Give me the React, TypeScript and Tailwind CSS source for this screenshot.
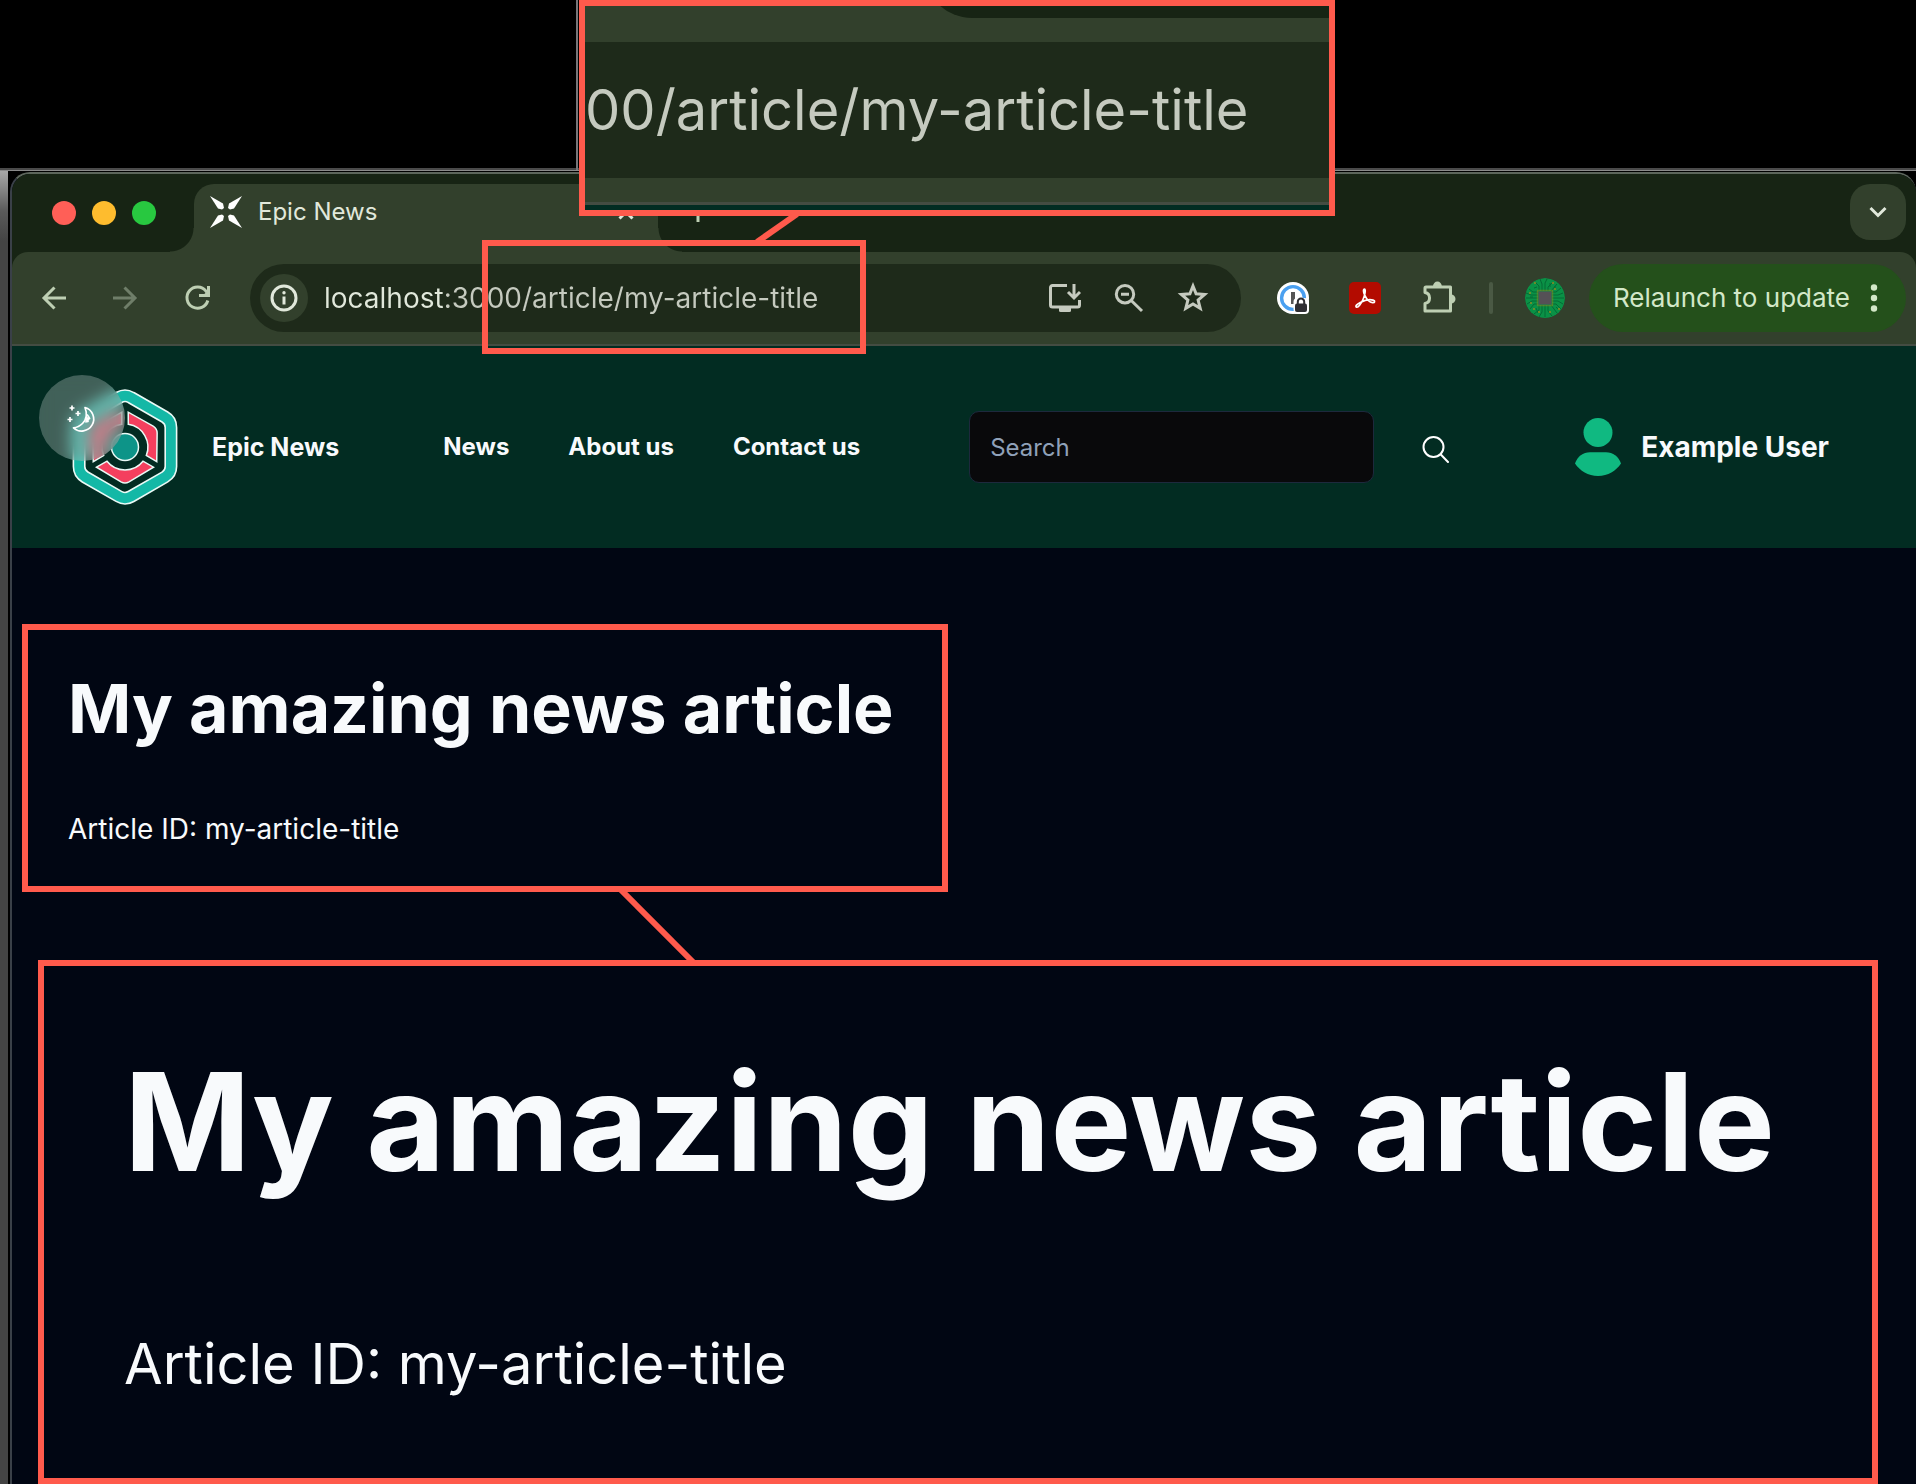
import React from "react";

const ARTICLE_PATH = "/article/my-article-title";

function Favicon() {
  return (
    <svg width="32" height="32" viewBox="0 0 32 32" fill="#fff" aria-hidden="true" className="shrink-0">
      <path d="M0 0 L13 7.5 L14 12 L12 13.5 L8 12.5 Z" />
      <path d="M32 0 L19 7.5 L18 12 L20 13.5 L24 12.5 Z" />
      <path d="M0 32 L13 24.5 L14 20 L12 18.5 L8 19.5 Z" />
      <path d="M32 32 L19 24.5 L18 20 L20 18.5 L24 19.5 Z" />
    </svg>
  );
}

function BackIcon() {
  return (
    <svg width="32" height="32" viewBox="0 0 32 32" fill="none" stroke="currentColor" strokeWidth="3" aria-hidden="true">
      <path d="M28 16H6M16.5 5.5L6 16l10.500 10.500" />
    </svg>
  );
}

function ForwardIcon() {
  return (
    <svg width="32" height="32" viewBox="0 0 32 32" fill="none" stroke="currentColor" strokeWidth="3" aria-hidden="true">
      <path d="M3 16h22M14.500 5.500L25 16 14.500 26.500" />
    </svg>
  );
}

function ReloadIcon() {
  return (
    <svg width="32" height="32" viewBox="0 0 32 32" fill="none" stroke="currentColor" strokeWidth="3" aria-hidden="true">
      <path d="M25.800 18.500A10.600 10.600 0 1 1 24 9.200L25 10.500" />
      <path d="M26.500 4v9.500H17" />
      <path d="M27 8v6h-7z" fill="currentColor" stroke="none" />
    </svg>
  );
}

function InfoIcon() {
  return (
    <svg width="28" height="28" viewBox="0 0 28 28" fill="none" aria-hidden="true">
      <circle cx="14" cy="14" r="12" stroke="#e1e8db" strokeWidth="3" />
      <path d="M14 12.500v8" stroke="#e1e8db" strokeWidth="3" />
      <circle cx="14" cy="8.800" r="1.700" fill="#e1e8db" />
    </svg>
  );
}

function InstallIcon() {
  return (
    <svg width="32" height="32" viewBox="0 0 32 32" fill="none" stroke="#c5cabf" strokeWidth="3" aria-hidden="true">
      <path d="M18 3.500H3.500a2 2 0 0 0-2 2V23a2 2 0 0 0 2 2h25a2 2 0 0 0 2-2v-5" />
      <path d="M25 2v13M19 10l6 6 6-6" />
      <path d="M10 25h12v3.500a1.500 1.500 0 0 1-1.500 1.500h-9a1.500 1.500 0 0 1-1.500-1.500z" fill="#c5cabf" stroke="none" />
    </svg>
  );
}

function ZoomOutIcon() {
  return (
    <svg width="32" height="32" viewBox="0 0 32 32" fill="none" stroke="#c5cabf" strokeWidth="3" aria-hidden="true">
      <circle cx="12" cy="12.200" r="8.700" />
      <path d="M8 12.200h8M18.500 18.700L29 29" />
    </svg>
  );
}

function StarIcon() {
  return (
    <svg width="32" height="32" viewBox="0 0 32 32" fill="none" stroke="#c5cabf" strokeWidth="3" strokeMiterlimit="10" aria-hidden="true">
      <path d="M16 4L19.100 11.800 27.600 12.500 21.100 18 23.200 26.300 16 21.900 8.800 26.300 10.900 18 4.400 12.500 12.900 11.800Z" />
    </svg>
  );
}

function PasswordIcon() {
  return (
    <svg width="32" height="32" viewBox="0 0 32 32" aria-hidden="true">
      <circle cx="16" cy="16" r="16" fill="#fff" />
      <rect x="16" y="16" width="16" height="16" rx="4" fill="#fff" />
      <circle cx="16" cy="16" r="11.400" fill="none" stroke="#4aa0f0" strokeWidth="3.400" />
      <rect x="14" y="10" width="4" height="12" fill="#555" />
      <rect x="16.500" y="16" width="15" height="15" rx="4" fill="#fff" />
      <rect x="18" y="21.500" width="12" height="8.500" rx="2" fill="#2f2f33" />
      <path d="M20.800 22v-2.200a3.200 3.200 0 0 1 6.400 0V22" fill="none" stroke="#2f2f33" strokeWidth="2" />
    </svg>
  );
}

function AcrobatIcon() {
  return (
    <svg width="32" height="32" viewBox="0 0 32 32" aria-hidden="true">
      <rect width="32" height="32" rx="5" fill="#b30b00" />
      <path
        d="M15.500 7.200c-1.400 0-1.300 3 .2 6 1.700 3.600 4.900 7.200 7.800 7.500 2.400.2 3-1.900.6-2.600-3.300-.9-9 .3-12.800 2.300-3.600 1.900-5.200 3.900-3.900 4.700 1.700 1 4.600-3.300 6.600-7.600 1.800-4 3.100-10.300 1.500-10.300z"
        fill="none"
        stroke="#fff"
        strokeWidth="1.700"
      />
    </svg>
  );
}

function PuzzleIcon() {
  return (
    <svg width="36" height="36" viewBox="0 0 36 36" aria-hidden="true">
      <path
        d="M5 7h24.500v24H4V23.500a5.600 5.600 0 0 0 0-11V8a1 1 0 0 1 1-1z"
        fill="none"
        stroke="#becfb3"
        strokeWidth="3"
        strokeLinejoin="round"
      />
      <path d="M12 6a4.400 4.400 0 0 1 8.800 0zM30 14.500a4.500 4.500 0 0 1 0 9z" fill="#becfb3" />
    </svg>
  );
}

function CircuitAvatar() {
  return (
    <svg width="40" height="40" viewBox="0 0 40 40" aria-hidden="true" className="rounded-full">
      <circle cx="20" cy="20" r="20" fill="#0a9146" />
      <g fill="none" stroke="#046a35" strokeWidth="1">
        <path d="M14 13V8l-4-4M17 13V6l-2-5M20 13V5l2-4M23 13V9l5-5M26 13l6-7M14 27v5l-5 4M17 27v7l-3 5M20 27v12M23 27v6l4 5M26 27l6 8" />
        <path d="M13 14H8l-4-3M13 17H6l-5-2M13 20H1M13 23H7l-5 3M13 26H9l-4 5M27 14h4l5-4M27 17h6l5-2M27 20h12M27 23h6l5 3M27 26h4l5 5" />
        <path d="M30 11V8M9 10l3-1M5 19l3 0M34 32l-3-3M25 5v4M11 30l2 5" />
      </g>
      <rect x="12.500" y="12.500" width="15" height="15" fill="none" stroke="#8f8a1c" strokeWidth="1.500" strokeDasharray="1 1" />
      <rect x="13.500" y="13.500" width="13" height="13" fill="#555156" />
      <g fill="#9a8c20">
        <circle cx="10" cy="5" r=".9" />
        <circle cx="28" cy="5" r=".9" />
        <circle cx="5" cy="15" r=".9" />
        <circle cx="6" cy="25" r=".9" />
        <circle cx="34" cy="31" r=".9" />
        <circle cx="30" cy="11" r=".9" />
        <circle cx="14" cy="34" r=".9" />
        <circle cx="25" cy="34" r=".9" />
        <circle cx="9" cy="31" r=".9" />
      </g>
    </svg>
  );
}

const SEGMENT = "M-28.500 20.200L-18 14.200A23 23 0 0 0 18 14.200L28.500 20.200 4 34.800Q0 37-4 34.800Z";
const HEXAGON =
  "M6 -49.500L39.900 -30Q45.900 -26.500 45.900 -19.600V19.600Q45.900 26.500 39.900 30L6 49.500Q0 53-6 49.500L-39.900 30Q-45.900 26.500-45.900 19.600V-19.600Q-45.900-26.500-39.900-30L-6-49.500Q0-53 6-49.500Z";

function SiteLogo() {
  return (
    <svg width="108" height="120" viewBox="-54 -60 108 120" aria-hidden="true" className="shrink-0">
      <g fill="none" strokeLinejoin="round">
        <path d={HEXAGON} stroke="#eafaf6" strokeWidth="13" />
        <path d={HEXAGON} stroke="#14b8a6" strokeWidth="9.800" />
      </g>
      <g fill="#f43f5e" stroke="#eafaf6" strokeWidth="1.500">
        <path d={SEGMENT} />
        <path d={SEGMENT} transform="rotate(-120)" />
        <path d={SEGMENT} transform="rotate(120)" />
      </g>
      <circle r="13.500" fill="#0d9488" stroke="#eafaf6" strokeWidth="1.500" />
    </svg>
  );
}

function MoonIcon() {
  return (
    <svg width="30" height="30" viewBox="0 0 30 30" fill="none" stroke="#fff" strokeWidth="1.700" strokeLinejoin="round" aria-hidden="true">
      <path d="M18 4.500A12 12 0 1 1 6.500 24.800C10 24.500 13 23 15.500 20.500 19 17 20.500 11 18 4.500Z" />
      <path d="M20 11.500c1.200 1.500 1.600 2.400 2.600 4l-1.800.8.200 2.200-2.800.5" />
      <path d="M19.500 14.500l2 1.500-2 2z" fill="#fff" />
      <path d="M5 2.500v5M2.500 5h5M11 8v5M8.500 10.500h5M3 14v5M.5 16.500h5" />
    </svg>
  );
}

function SearchIcon() {
  return (
    <svg width="28" height="28" viewBox="0 0 28 28" fill="none" stroke="#fff" strokeWidth="2" strokeLinecap="round" aria-hidden="true">
      <circle cx="11.500" cy="12" r="10" />
      <path d="M18.800 19.500L26 27" />
    </svg>
  );
}

function UserIcon() {
  return (
    <svg width="46" height="58" viewBox="0 0 46 58" fill="#10b981" aria-hidden="true" className="shrink-0">
      <circle cx="23" cy="14.500" r="14.500" />
      <path d="M0 45.500C2.500 38.500 8 34.300 15 34.300h16C38 34.300 43.500 38.500 46 45.500 41 53 33 58 23 58S5 53 0 45.500Z" />
    </svg>
  );
}

function TabStrip() {
  return (
    <div className="flex h-[78px] items-stretch bg-[#172414] pr-[10px] pl-10">
      <div className="flex items-center gap-4" role="group" aria-label="Window controls">
        <button aria-label="Close window" className="size-6 rounded-full bg-[#ff5f57]" />
        <button aria-label="Minimise window" className="size-6 rounded-full bg-[#febc2e]" />
        <button aria-label="Zoom window" className="size-6 rounded-full bg-[#28c840]" />
      </div>
      <div className="relative mt-[10px] ml-[38px] flex w-[464px] items-start rounded-t-[20px] bg-[#32402c] pt-3 pr-6 pl-4">
        <span className="absolute bottom-0 -left-6 size-6 bg-[radial-gradient(circle_at_0_0,transparent_23px,#32402c_24px)]" />
        <span className="absolute -right-6 bottom-0 size-6 bg-[radial-gradient(circle_at_100%_0,transparent_23px,#32402c_24px)]" />
        <Favicon />
        <span className="ml-4 flex-1 text-[24px] leading-8 text-[#e1e8db]">Epic News</span>
        <button aria-label="Close tab" className="mt-2 text-[#e1e8db]">
          <svg width="16" height="16" viewBox="0 0 16 16" fill="none" stroke="currentColor" strokeWidth="3" aria-hidden="true">
            <path d="M1.500 1.500l13 13M14.500 1.500l-13 13" />
          </svg>
        </button>
      </div>
      <button aria-label="New tab" className="ml-[30px] text-[#becfb3]">
        <svg width="20" height="20" viewBox="0 0 20 20" fill="none" stroke="currentColor" strokeWidth="3" aria-hidden="true">
          <path d="M10 1v18M1 10h18" />
        </svg>
      </button>
      <button
        aria-label="Search tabs"
        className="mt-[10px] ml-auto flex size-14 items-center justify-center rounded-[20px] bg-[#32402c] text-[#e1e8db]"
      >
        <svg width="18" height="12" viewBox="0 0 18 12" fill="none" stroke="currentColor" strokeWidth="3" aria-hidden="true">
          <path d="M1.500 2L9 9.500 16.500 2" />
        </svg>
      </button>
    </div>
  );
}

function Toolbar() {
  return (
    <div className="bg-[#172414]">
      <div className="flex h-[94px] items-center rounded-t-[16px] border-b-2 border-[#444c42] bg-[#32402c] pr-[10px] pl-[26px]">
        <div className="flex gap-10 text-[#becfb3]">
          <button aria-label="Back">
            <BackIcon />
          </button>
          <button aria-label="Forward" className="text-[#6f7e69]">
            <ForwardIcon />
          </button>
          <button aria-label="Reload">
            <ReloadIcon />
          </button>
        </div>
        <div className="ml-9 flex h-[68px] flex-1 items-center rounded-full bg-[#1e2a1a] pr-8 pl-[10px]">
          <button aria-label="Site information" className="flex size-12 items-center justify-center rounded-full bg-[#32402c]">
            <InfoIcon />
          </button>
          <input
            aria-label="Address"
            defaultValue={"localhost:3000" + ARTICLE_PATH}
            className="ml-4 min-w-0 flex-1 bg-[linear-gradient(90deg,#e1e8db_122px,#c5cabf_122px)] bg-clip-text text-[28px] leading-10 text-transparent outline-none"
          />
          <div className="flex gap-8">
            <button aria-label="Install app">
              <InstallIcon />
            </button>
            <button aria-label="Zoom out">
              <ZoomOutIcon />
            </button>
            <button aria-label="Bookmark this page">
              <StarIcon />
            </button>
          </div>
        </div>
        <div className="ml-9 flex items-center gap-10">
          <button aria-label="Password manager">
            <PasswordIcon />
          </button>
          <button aria-label="PDF tools">
            <AcrobatIcon />
          </button>
          <button aria-label="Extensions">
            <PuzzleIcon />
          </button>
        </div>
        <span className="mx-8 h-8 w-1 rounded-full bg-[#4a5944]" />
        <button aria-label="Profile">
          <CircuitAvatar />
        </button>
        <button className="ml-6 flex h-[68px] items-center gap-5 rounded-full bg-[#24501b] pr-7 pl-6 text-[#d3e8c8]">
          <span className="text-[26px] leading-10">Relaunch to update</span>
          <svg width="8" height="28" viewBox="0 0 8 28" fill="currentColor" aria-hidden="true">
            <circle cx="4" cy="3.500" r="3.200" />
            <circle cx="4" cy="14" r="3.200" />
            <circle cx="4" cy="24.500" r="3.200" />
          </svg>
        </button>
      </div>
    </div>
  );
}

function SiteHeader() {
  return (
    <header className="relative flex h-[202px] items-center bg-[#022c22] pr-[87px] pl-[59px] font-bold text-slate-50">
      <SiteLogo />
      <button
        aria-label="Toggle dark mode"
        className="absolute top-[29px] left-[27px] flex size-[86px] items-center justify-center rounded-full bg-white/25 backdrop-blur-[8px]"
      >
        <MoonIcon />
      </button>
      <span className="ml-[33px] text-[25px] leading-8 whitespace-nowrap">Epic News</span>
      <nav className="ml-[104px] flex gap-[59px] text-[24px] leading-8 whitespace-nowrap">
        <a href="#news">News</a>
        <a href="#about">About us</a>
        <a href="#contact">Contact us</a>
      </nav>
      <input
        type="search"
        aria-label="Search"
        placeholder="Search"
        className="ml-[109px] h-[72px] min-w-0 flex-1 rounded-[10px] border border-slate-800 bg-[#09090b] px-5 text-[24px] leading-8 font-normal outline-none placeholder:text-slate-400"
      />
      <button aria-label="Submit search" className="mt-1 ml-12">
        <SearchIcon />
      </button>
      <div className="ml-[125px] flex items-center gap-5">
        <UserIcon />
        <span className="text-[28px] leading-10 whitespace-nowrap">Example User</span>
      </div>
    </header>
  );
}

function BrowserWindow() {
  return (
    <div className="mt-px ml-[2px] flex min-w-0 flex-1 flex-col overflow-hidden rounded-t-[20px] border-t-2 border-l-2 border-t-[#5d665c] border-l-[#3a4048] bg-[#010613]">
      <TabStrip />
      <Toolbar />
      <SiteHeader />
      <main className="flex-1 px-14 pt-[120px] text-slate-50">
        <h1 className="text-[68px] leading-[80px] font-bold">My amazing news article</h1>
        <p className="mt-[61px] text-[28px] leading-10">Article ID: my-article-title</p>
      </main>
    </div>
  );
}

function AddressCallout() {
  return (
    <aside
      aria-label="Address, enlarged"
      className="absolute top-0 left-[579px] flex h-[216px] w-[756px] flex-col overflow-hidden border-[6px] border-[#ff5a4c] bg-[#32402c]"
    >
      <div className="-mt-9 ml-[339px] h-12 shrink-0 rounded-bl-[48px] bg-[#172414]" />
      <div className="mt-6 flex h-[136px] shrink-0 items-center bg-[#1e2a1a] text-[56px] leading-[64px] whitespace-nowrap text-[#c5cabf]">
        <span>00{ARTICLE_PATH}</span>
      </div>
      <div className="mt-6 h-[3px] shrink-0 bg-[#444c42]" />
      <div className="flex-1 bg-[#022c22]" />
    </aside>
  );
}

function ArticleCallout() {
  return (
    <aside
      aria-label="Article, enlarged"
      className="absolute top-[960px] right-[38px] left-[38px] h-[524px] overflow-hidden border-[6px] border-[#ff5a4c] bg-[#010613] pt-[76px] pl-[80px] whitespace-nowrap text-slate-50"
    >
      <p className="text-[136px] leading-[160px] font-bold">My amazing news article</p>
      <p className="mt-[130px] text-[56px] leading-[64px]">Article ID: my-article-title</p>
    </aside>
  );
}

export default function App() {
  return (
    <div className="relative flex min-h-screen flex-col overflow-hidden bg-black font-[Inter,sans-serif]">
      <div className="h-[168px]" />
      <div className="flex flex-1 flex-col border-t-2 border-[#4a4a4a]">
        <div className="flex flex-1 border-t border-[#8a8a8a]">
          <div className="w-2 bg-[linear-gradient(180deg,#a8a8a8_0px,#8a8a8a_16px,#5a5a5a_40px,#444444_70px)]" />
          <BrowserWindow />
        </div>
      </div>

      <div className="absolute top-0 left-[576px] h-[170px] w-[2px] bg-[#77777a]" />
      <AddressCallout />
      <svg width="60" height="30" viewBox="0 0 60 30" className="absolute top-[214px] left-[747px]" aria-hidden="true">
        <path d="M50 0L10 28" stroke="#ff5a4c" strokeWidth="6" />
      </svg>
      <div className="absolute top-[240px] left-[482px] h-[114px] w-[384px] border-[6px] border-[#ff5a4c]" />

      <div className="absolute top-[624px] left-[22px] h-[268px] w-[926px] border-[6px] border-[#ff5a4c]" />
      <svg width="90" height="76" viewBox="0 0 90 76" className="absolute top-[888px] left-[615px]" aria-hidden="true">
        <path d="M4 0L80 76" stroke="#ff5a4c" strokeWidth="6" />
      </svg>
      <ArticleCallout />
    </div>
  );
}
